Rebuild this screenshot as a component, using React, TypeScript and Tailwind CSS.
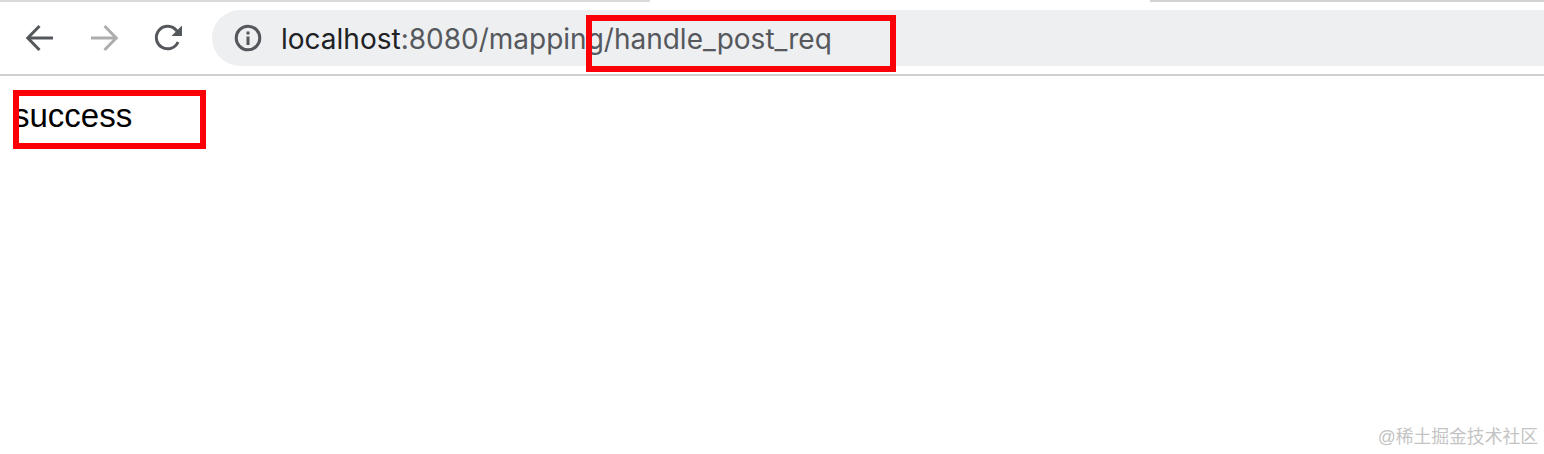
import React from "react";

function Back({ color }: { color: string }) {
  return (
    <svg width="30" height="30" viewBox="0 0 30 30" fill="none" stroke={color} strokeWidth="3">
      <path d="M28 15H3" />
      <path d="M14.5 3 2.800 15l11.700 12" />
    </svg>
  );
}

function Forward({ color }: { color: string }) {
  return (
    <svg width="30" height="30" viewBox="0 0 30 30" fill="none" stroke={color} strokeWidth="3">
      <path d="M1 15h25" />
      <path d="M14.500 3 26.200 15 14.500 27" />
    </svg>
  );
}

function Reload() {
  return (
    <svg width="30" height="30" viewBox="0 0 30 30" fill="none">
      <path d="M24 19a11.300 11.300 0 1 1-1.500-11.500L25 10" stroke="#54575b" strokeWidth="3" />
      <path d="M28 2.500V13H17.500z" fill="#54575b" />
    </svg>
  );
}

function Info() {
  return (
    <svg width="28" height="28" viewBox="0 0 28 28" fill="none">
      <circle cx="14" cy="14" r="11.800" stroke="#54575b" strokeWidth="3" />
      <rect x="12.500" y="7.500" width="3" height="3" fill="#54575b" />
      <rect x="12.500" y="12.500" width="3" height="8.500" fill="#54575b" />
    </svg>
  );
}

export default function App() {
  return (
    <div className="relative h-[454px] w-[1544px] overflow-hidden bg-white">
      <div className="flex h-[2px]">
        <div className="w-[650px] bg-[#d9dadc]" />
        <div className="flex-1" />
        <div className="w-[394px] bg-[#d0d2d3]" />
      </div>
      <div className="flex h-[72px] items-start pl-[25px] pt-[8px]">
        <div className="flex h-[56px] items-center gap-[34.5px]">
          <Back color="#54575b" />
          <Forward color="#adadad" />
          <Reload />
        </div>
        <div className="ml-[28px] flex h-[56px] flex-1 items-center rounded-l-[28px] bg-[#eeeff1] pl-[22px]">
          <Info />
          <div className="ml-[19px] whitespace-nowrap pt-[1px] font-['Inter',sans-serif] text-[28px] leading-none text-[#55585c]">
            <span className="text-[#202124]">localhost</span>:8080/mapping/handle_post_req
          </div>
        </div>
      </div>
      <div className="h-[2px] bg-[#d0d0d0]" />
      <div className="pl-[13px] pt-[22px] font-['Liberation_Sans',sans-serif] text-[33px] leading-[36px] text-black">
        success
      </div>
      <div className="absolute left-[586px] top-[15px] h-[57px] w-[310px] border-[6px] border-[#fb0007]" />
      <div className="absolute left-[13px] top-[90px] h-[59px] w-[193px] border-[6px] border-[#fb0007]" />
      <div className="absolute right-[6px] top-[425px] whitespace-nowrap font-['Liberation_Sans','Noto_Sans_CJK_SC',sans-serif] text-[17.8px] leading-[24px] text-[#c4c4c4]">
        @稀土掘金技术社区
      </div>
    </div>
  );
}
